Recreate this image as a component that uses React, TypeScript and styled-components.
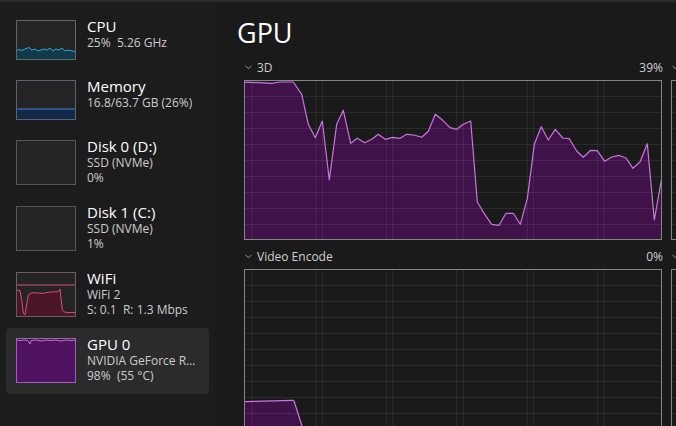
import styled, { createGlobalStyle } from "styled-components";

const GlobalStyle = createGlobalStyle`
    html, body {
        margin: 0;
        padding: 0;
        background: #1a1a1a;
        overflow: hidden;
    }
    body {
        font-family: "Segoe UI", "Open Sans", "Noto Sans", sans-serif;
        color: #ffffff;
    }
`;

type Pt = [number, number];

const Window = styled.div`
    width: 676px;
    height: 426px;
    display: flex;
    box-sizing: border-box;
    border-top: 2px solid #2b2b2b;
    overflow: hidden;
`;

const Sidebar = styled.nav`
    width: 215px;
    flex: none;
    box-sizing: border-box;
    padding: 8px 6px 0;
    background: #1c1c1c;
    display: flex;
    flex-direction: column;
`;

const NavItem = styled.div<{ $tall?: boolean; $active?: boolean }>`
    display: flex;
    align-items: flex-start;
    gap: 11px;
    height: ${(p) => (p.$tall ? 66 : 60)}px;
    box-sizing: border-box;
    padding: 7px 10px 0;
    border-radius: 4px;
    background: ${(p) => (p.$active ? "#2b2b2b" : "transparent")};
`;

const ThumbFrame = styled.div<{ $h: number; $border: string }>`
    width: 60px;
    height: ${(p) => p.$h}px;
    flex: none;
    margin-top: 3px;
    box-sizing: border-box;
    border: 1px solid ${(p) => p.$border};
    background: #242424;
    overflow: hidden;

    svg {
        display: block;
    }
`;

const Info = styled.div`
    display: flex;
    flex-direction: column;
    min-width: 0;
    max-width: 110px;
`;

const Title = styled.div`
    font-size: 15px;
    line-height: 18px;
    color: #ffffff;
    white-space: nowrap;
`;

const Sub = styled.div`
    font-size: 12px;
    line-height: 15px;
    color: #cccccc;
    white-space: pre;
    overflow: hidden;
    text-overflow: ellipsis;
`;

const Main = styled.main`
    flex: 1;
    min-width: 0;
    padding-left: 22px;
    overflow: hidden;
    background: #1a1a1a;
`;

const Heading = styled.h1`
    margin: 13px 0 8px;
    font-size: 27px;
    line-height: 36px;
    font-weight: 400;
    color: #ffffff;
`;

const ChartGrid = styled.div`
    display: grid;
    grid-template-columns: 418px 418px;
    column-gap: 9px;
    row-gap: 8px;
    margin-left: 7px;
`;

const Section = styled.section`
    display: flex;
    flex-direction: column;
`;

const SectionHeader = styled.div`
    display: flex;
    align-items: center;
    height: 16px;
    margin-bottom: 5px;
    font-size: 12px;
    color: #cfcfcf;
    white-space: nowrap;

    svg {
        margin: 0 5px 0 1px;
        flex: none;
    }
`;

const Value = styled.span`
    margin-left: auto;
    margin-right: -1px;
`;

const ChartFrame = styled.div`
    width: 418px;
    height: 160px;
    box-sizing: border-box;
    border: 1px solid #858585;

    svg {
        display: block;
    }
`;

const toPath = (pts: Pt[]) => pts.map(([x, y]) => `${x},${y}`).join(" ");

function Thumb({ h, border, fill, stroke, points, guide }: {
    h: number;
    border: string;
    fill?: string;
    stroke?: string;
    points?: Pt[];
    guide?: number;
}) {
    const area = points ? `0,${h} ${toPath(points)} 60,${h}` : "";
    return (
        <ThumbFrame $h={h} $border={border}>
            <svg width={58} height={h - 2} viewBox={`1 1 58 ${h - 2}`}>
                {points && <polygon points={area} fill={fill} />}
                {guide !== undefined && (
                    <line x1={0} x2={60} y1={guide} y2={guide} stroke={stroke} strokeWidth={1} />
                )}
                {points && <polyline points={toPath(points)} fill="none" stroke={stroke} strokeWidth={1} />}
            </svg>
        </ThumbFrame>
    );
}

const Chevron = () => (
    <svg width="7" height="5" viewBox="0 0 7 5">
        <path d="M0.5 0.8 L3.5 3.8 L6.5 0.8" fill="none" stroke="#9c9c9c" strokeWidth="1" />
    </svg>
);

const gridA = [8, 78.4, 148.8, 219.2, 289.6, 360];
const gridB = [72, 142.4, 212.8, 283.2, 353.6];
const gridY = [16, 32, 48, 64, 80, 96, 112, 128, 144];

function Chart({ points }: { points?: Pt[] }) {
    return (
        <ChartFrame>
            <svg width={416} height={158} viewBox="1 1 416 158" preserveAspectRatio="none">
                {points && <polygon points={`0,170 ${toPath(points)} 418,170`} fill="#40124a" />}
                <g stroke="rgba(255,255,255,0.08)" strokeWidth={1}>
                    {gridY.map((y) => (
                        <line key={"h" + y} x1={0} x2={418} y1={y + 0.5} y2={y + 0.5} />
                    ))}
                    {[...gridA, ...gridB].map((x) => (
                        <line key={"v" + x} x1={x} x2={x} y1={0} y2={160} />
                    ))}
                </g>
                {points && (
                    <polyline points={toPath(points)} fill="none" stroke="#c877dd" strokeWidth={1.2} strokeLinejoin="round" />
                )}
            </svg>
        </ChartFrame>
    );
}

const cpuPts: Pt[] = [
    [0, 31], [3, 29.5], [6, 30.5], [10, 28.5], [13, 27.5], [16, 30], [19, 29], [22, 31],
    [25, 30], [28, 29], [31, 30], [34, 28], [37, 31], [40, 29], [43, 30], [46, 28],
    [49, 31], [52, 30], [55, 30.5], [58, 31.5], [60, 31.5],
];
const memPts: Pt[] = [[0, 29], [60, 29]];
const wifiPts: Pt[] = [
    [0, 18], [4, 18.7], [5.7, 28], [7.3, 41], [9, 43], [12.3, 23], [15.7, 20.7], [27.3, 21.3],
    [34, 20], [42.3, 19.7], [44, 17], [46.3, 38], [49, 40.3], [60, 40.7],
];
const gpuThumbPts: Pt[] = [
    [0, 2], [5, 2.5], [8, 2], [12, 2.5], [14, 6], [15, 2.5], [20, 2], [25, 3], [30, 2],
    [35, 2.5], [40, 2], [45, 3], [50, 2], [55, 2.5], [60, 2],
];

const d3Pts: Pt[] = [
    [0, 2], [27.7, 3.3], [36, 2], [49.3, 2], [57.7, 14.3], [64.3, 44.3], [71.3, 57.7], [78.3, 41],
    [85.3, 100], [92.7, 44.3], [99.3, 30.3], [106.7, 63.3], [113.3, 58.3], [120.7, 62.7],
    [127.7, 59.3], [134.3, 54.3], [141.3, 59.3], [148.7, 57.3], [156, 58.3], [162.7, 54.3],
    [170, 55], [177.7, 57.3], [184.3, 51.3], [191.3, 34.3], [198.7, 40.3], [206, 47.7],
    [212.7, 49.3], [219.3, 44.3], [226.7, 41], [233.3, 122], [240.3, 133.7], [247.7, 144.3],
    [255, 145.3], [262, 133.3], [269.3, 133.3], [276.3, 144.3], [283.3, 118.7], [290.3, 64.3],
    [297.3, 46.7], [304.3, 60], [311.3, 49.3], [318.7, 58], [325.3, 58.7], [332.7, 71],
    [339.3, 77.3], [346.7, 70.3], [353.3, 70.7], [360.7, 81.3], [367.7, 77], [374.7, 75.3],
    [382, 78], [389, 88.3], [396, 82], [403.3, 63.7], [410.3, 140], [417.3, 100],
];
const encodePts: Pt[] = [[0, 132.7], [48.7, 131.3], [50, 132], [57.7, 156], [59, 161]];

const charts: { label: string; value: string; points?: Pt[] }[] = [
    { label: "3D", value: "39%", points: d3Pts },
    { label: "Copy", value: "0%" },
    { label: "Video Encode", value: "0%", points: encodePts },
    { label: "Video Decode", value: "0%" },
];

export default function App() {
    return (
        <>
            <GlobalStyle />
            <Window>
                <Sidebar>
                    <NavItem>
                        <Thumb h={40} border="#5d676b" fill="#113b4a" stroke="#2fa7d4" points={cpuPts} />
                        <Info>
                            <Title>CPU</Title>
                            <Sub>{"25%  5.26 GHz"}</Sub>
                        </Info>
                    </NavItem>
                    <NavItem>
                        <Thumb h={40} border="#5b626d" fill="#15294a" stroke="#3f82d6" points={memPts} />
                        <Info>
                            <Title>Memory</Title>
                            <Sub>16.8/63.7 GB (26%)</Sub>
                        </Info>
                    </NavItem>
                    <NavItem $tall>
                        <Thumb h={45} border="#565656" />
                        <Info>
                            <Title>Disk 0 (D:)</Title>
                            <Sub>SSD (NVMe)</Sub>
                            <Sub>0%</Sub>
                        </Info>
                    </NavItem>
                    <NavItem $tall>
                        <Thumb h={45} border="#565656" />
                        <Info>
                            <Title>Disk 1 (C:)</Title>
                            <Sub>SSD (NVMe)</Sub>
                            <Sub>1%</Sub>
                        </Info>
                    </NavItem>
                    <NavItem $tall>
                        <Thumb h={45} border="#6e5a60" fill="#4a1526" stroke="#d4507a" points={wifiPts} guide={13} />
                        <Info>
                            <Title>WiFi</Title>
                            <Sub>WiFi 2</Sub>
                            <Sub>{"S: 0.1  R: 1.3 Mbps"}</Sub>
                        </Info>
                    </NavItem>
                    <NavItem $tall $active>
                        <Thumb h={45} border="#a35cbb" fill="#4f1260" stroke="#c46fd6" points={gpuThumbPts} />
                        <Info>
                            <Title>GPU 0</Title>
                            <Sub>NVIDIA GeForce RTX 4090</Sub>
                            <Sub>{"98%  (55 °C)"}</Sub>
                        </Info>
                    </NavItem>
                </Sidebar>
                <Main>
                    <Heading>GPU</Heading>
                    <ChartGrid>
                        {charts.map((c) => (
                            <Section key={c.label}>
                                <SectionHeader>
                                    <Chevron />
                                    <span>{c.label}</span>
                                    <Value>{c.value}</Value>
                                </SectionHeader>
                                <Chart points={c.points} />
                            </Section>
                        ))}
                    </ChartGrid>
                </Main>
            </Window>
        </>
    );
}
